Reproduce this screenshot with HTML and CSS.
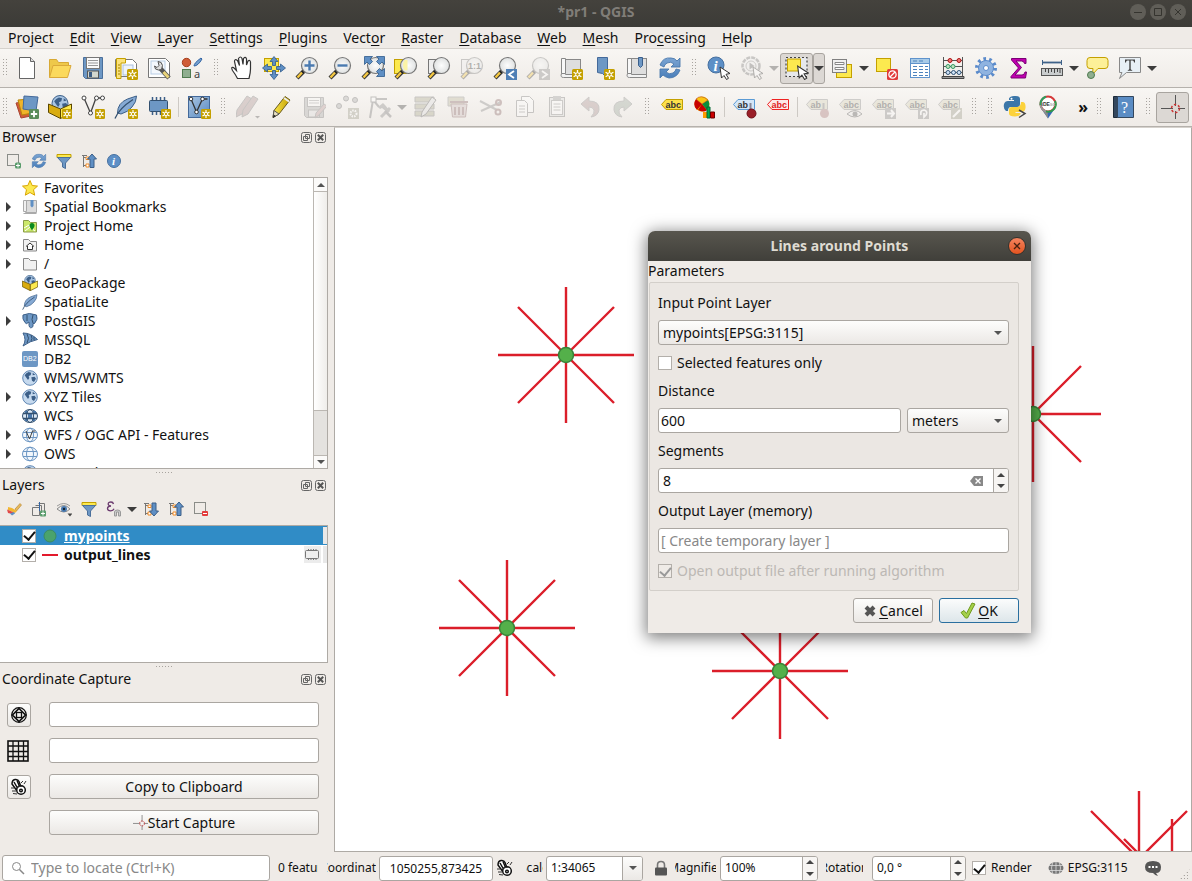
FILE: index.html
```html
<!DOCTYPE html>
<html lang="en">
<head>
<meta charset="utf-8">
<title>*pr1 - QGIS</title>
<link rel="stylesheet" href="styles.css">
</head>
<body>
<svg class="paints" aria-hidden="true">
  <defs>
    <linearGradient id="g-pen" x1="0" x2="1"><stop offset="0" stop-color="#fce94f"/><stop offset="1" stop-color="#c4a000"/></linearGradient>
    <linearGradient id="g-blue" x1="0" y1="0" x2="1" y2="1"><stop offset="0" stop-color="#a9c5e3"/><stop offset="1" stop-color="#5a8ac0"/></linearGradient>
    <linearGradient id="g-sync" x1="0" y1="0" x2="0" y2="1"><stop offset="0" stop-color="#7ba4d2"/><stop offset="1" stop-color="#4b7fba"/></linearGradient>
    <radialGradient id="g-lens"><stop offset="0" stop-color="#fdfdfd"/><stop offset="1" stop-color="#dfe1e1"/></radialGradient>
  </defs>
</svg>
<svg class="defs" aria-hidden="true">
  <symbol id="b-new" viewBox="0 0 11 11"><rect width="11" height="11" rx="1.500" fill="#c4a000"/><path d="M5.500 1v9M1.600 3.250l7.800 4.500M1.600 7.750l7.800-4.500" stroke="#fff" stroke-width="1.300"/><circle cx="5.500" cy="5.500" r="1.800" fill="#c4a000" stroke="#fff"/></symbol>
  <symbol id="b-plus" viewBox="0 0 11 11"><rect width="11" height="11" rx="1.500" fill="#5a8c5a"/><path d="M5.500 2v7M2 5.500h7" stroke="#fff" stroke-width="2"/></symbol>
  <symbol id="b-mag" viewBox="0 0 24 24"><path d="M8.500 15.500L2 22" stroke="#333" stroke-width="4.200"/><path d="M7 16.500L2.500 21.500" stroke="#f5c842" stroke-width="2.400"/><path d="M9.500 14L7.500 16.500" stroke="#222" stroke-width="3"/><circle cx="14.500" cy="9.500" r="8" fill="url(#g-lens)" stroke="#777" stroke-width="1.200"/></symbol>
  <symbol id="b-cursor" viewBox="0 0 12 14"><path d="M1 1l1.500 11 2.500-2.500 2.500 4 2-1.200-2.500-4 4-.8z" fill="#fff" stroke="#333"/></symbol>
  <symbol id="b-cont" viewBox="0 0 24 24"><path d="M4 8q2-4 6-5l4 1-1 4-3 1 1 3-2 3-3-4zM14 11l5-1 2 3-3 5-3-2zM16 4l4 3-4 1z" fill="#3c5f88"/></symbol>

  <symbol id="i-new" viewBox="0 0 24 24"><path d="M4.500 1.500h11l4 4v17h-15z" fill="#fff" stroke="#666"/><path d="M15.500 1.500v4h4" fill="#ddd" stroke="#666"/></symbol>
  <symbol id="i-open" viewBox="0 0 24 24"><path d="M1.500 21.500v-18h7l2 3h10v4" fill="#eec84a" stroke="#d8a934"/><path d="M1.500 21.500l3.500-12h18l-3.500 12z" fill="#fbd95d" stroke="#dba93a"/></symbol>
  <symbol id="i-save" viewBox="0 0 24 24"><path d="M2.500 1.500h19v21h-17l-2-2z" fill="#6d97c4" stroke="#4a6f9b"/><rect x="5.500" y="1.500" width="13" height="11" fill="#fafafa" stroke="#777"/><path d="M7 4.500h10M7 7h10M7 9.500h10" stroke="#999"/><rect x="6.500" y="15" width="11" height="7" fill="#d3d7cf" stroke="#555"/><rect x="8" y="16" width="3" height="5" fill="#3b5c85"/></symbol>
  <symbol id="i-layout" viewBox="0 0 24 24"><path d="M1.500 3.500h17l4 4v13h-21z" fill="#fff" stroke="#777"/><rect x="9" y="9" width="10" height="10" fill="#eef3fa" stroke="#a9c0dc"/><path d="M2.500 2.500h9v4.500h-4.500v15.500h-4.500z" fill="#fce27a" stroke="#c4a000"/><path d="M4 9h2M4 12h2M4 15h2M4 18h2" stroke="#a08000"/><use href="#b-new" x="13" y="13" width="11" height="11"/></symbol>
  <symbol id="i-lmgr" viewBox="0 0 24 24"><path d="M1.500 2.500h17l4 4v15h-21z" fill="#fff" stroke="#777"/><rect x="4" y="5" width="14" height="13" fill="#f4f8fd" stroke="#b9cde4"/><path d="M13 12l9 10" stroke="#555" stroke-width="4.500"/><path d="M16.500 16l5 5.500" stroke="#e8d37a" stroke-width="3"/><path d="M11 5.500q4 0 4.500 4l-1 4-3 .5q-4 0-4-4l2.500 1.500 2-2z" fill="#ddd" stroke="#555"/></symbol>
  <symbol id="i-style" viewBox="0 0 24 24"><circle cx="6.500" cy="6.500" r="4.200" fill="#cf5c36" stroke="#a63f1d"/><path d="M14 10q0-3 7-8l1 1q-4 7-8 7z" fill="#729fcf" stroke="#3465a4"/><rect x="2.500" y="13.500" width="8" height="8" fill="#8fae8f" stroke="#4f7a4f"/><text x="14" y="22" font-size="11" font-family="Noto Sans" fill="#444">a</text></symbol>
  <symbol id="i-hand" viewBox="0 0 24 24"><path d="M8.500 22.500q-2-4-5-8-2-4 1-3l3 3-2-9q0-3 3-1l2 5-1-7q2-3 3.500 0l1 6 .5-6q2-2.500 3 .5v6l1.500-4q2-1.500 2.500 1v7q0 4-1.500 9.500z" fill="#fff" stroke="#333" stroke-width="1.200"/></symbol>
  <symbol id="i-pan" viewBox="0 0 24 24"><rect x="2.500" y="2.500" width="14" height="13" fill="#fce94f" stroke="#c4a000"/><path d="M12 .5l4 5h-2.500v4h-3v-4h-2.500zM12 23.500l4-5h-2.500v-4h-3v4h-2.500zM.5 12l5-4v2.500h4v3h-4v2.500zM23.500 12l-5-4v2.500h-4v3h4v2.500z" fill="#5f8fc4" stroke="#2e5a8c" stroke-width=".8"/></symbol>
  <symbol id="i-zin" viewBox="0 0 24 24"><use href="#b-mag" width="24" height="24"/><path d="M14.500 4.500v10M9.500 9.500h10" stroke="#4a7ab0" stroke-width="2.400"/></symbol>
  <symbol id="i-zout" viewBox="0 0 24 24"><use href="#b-mag" width="24" height="24"/><path d="M9.500 9.500h10" stroke="#4a7ab0" stroke-width="2.400"/></symbol>
  <symbol id="i-zfull" viewBox="0 0 24 24"><use href="#b-mag" width="24" height="24"/><path d="M3.500.5h8l-2.500 2.500 2.500 2.500-3 3-2.500-2.500-2.500 2.500zM23.500.5h-8l2.500 2.500-2.500 2.500 3 3 2.500-2.500 2.500 2.500zM23.500 20.500h-8l2.500-2.500-2.500-2.500 3-3 2.500 2.500 2.500-2.500z" fill="#5f8fc4" stroke="#2e5a8c" stroke-width=".8"/></symbol>
  <symbol id="i-zsel" viewBox="0 0 24 24"><rect x=".5" y="3.500" width="12" height="14" fill="#fce94f" stroke="#c4a000"/><use href="#b-mag" width="24" height="24"/><path d="M13.500 4h-3q-3 5 0 10.500h3z" fill="#fbf3a6"/></symbol>
  <symbol id="i-zlay" viewBox="0 0 24 24"><rect x="1.500" y="3.500" width="12" height="14" fill="#eee" stroke="#777"/><use href="#b-mag" width="24" height="24"/></symbol>
  <symbol id="i-znat" viewBox="0 0 24 24"><rect x="1.500" y="3.500" width="12" height="14" fill="#eee" stroke="#777"/><use href="#b-mag" width="24" height="24"/><text x="8" y="13" font-size="9" font-weight="700" font-family="Liberation Sans" fill="#333">1:1</text></symbol>
  <symbol id="i-zlast" viewBox="0 0 24 24"><use href="#b-mag" width="24" height="24"/><rect x="13" y="13" width="11" height="11" fill="#4f7fb5"/><path d="M21 15l-5 3.500 5 3.500" fill="none" stroke="#fff" stroke-width="1.800"/></symbol>
  <symbol id="i-znext" viewBox="0 0 24 24"><use href="#b-mag" width="24" height="24"/><rect x="13" y="13" width="11" height="11" fill="#888"/><path d="M16 15l5 3.500-5 3.500" fill="none" stroke="#fff" stroke-width="1.800"/></symbol>
  <symbol id="i-map" viewBox="0 0 24 24"><rect x="5.500" y="3.500" width="16" height="17" fill="#dedede" stroke="#888"/><path d="M2.500 2.500h4v15h-4z" fill="#f8f8f8" stroke="#888"/><path d="M2.500 17.500q-1.500 4 2 4h17v-3h-15v-1z" fill="#f2f2f2" stroke="#888"/><use href="#b-new" x="13" y="13" width="11" height="11"/></symbol>
  <symbol id="i-bmnew" viewBox="0 0 24 24"><path d="M5.500 1.500h10v21l-5-5-5-1z" fill="#6d97c4" stroke="#44699a"/><use href="#b-new" x="12" y="13" width="11" height="11"/></symbol>
  <symbol id="i-bm" viewBox="0 0 24 24"><rect x="5.500" y="2.500" width="16" height="18" fill="#dedede" stroke="#888"/><path d="M2.500 2.500h4v15h-4z" fill="#f8f8f8" stroke="#888"/><path d="M2.500 17.500q-1.500 4 2 4h17v-3h-15v-1z" fill="#f2f2f2" stroke="#888"/><path d="M13.500 1.500h4v8l-2 2-2-2z" fill="#6d97c4" stroke="#3b5f8c"/></symbol>
  <symbol id="i-refresh" viewBox="0 0 24 24"><path d="M2 9q3-8 11-7 4 0 6 3l3-3v9h-9l3-3q-3-3-7-1-3 2-3 4zM22 14q-3 8-11 8-4-1-6-3l-3 3v-9h9l-3 3q3 3 7 1 3-2 3-4z" fill="url(#g-sync)" stroke="#4a78ad" stroke-width=".9"/></symbol>
  <symbol id="i-ident" viewBox="0 0 24 24"><circle cx="9" cy="9" r="8" fill="#5d8fc6" stroke="#46709f"/><text x="6.500" y="14.500" font-size="15" font-style="italic" font-weight="700" font-family="Liberation Serif" fill="#fff">i</text><use href="#b-cursor" x="12" y="10" width="12" height="14"/></symbol>
  <symbol id="i-run" viewBox="0 0 24 24"><circle cx="11" cy="10" r="8.500" fill="#eee" stroke="#777" stroke-width="2.500" stroke-dasharray="4 1"/><circle cx="11" cy="10" r="5" fill="#eee" stroke="#888"/><path d="M9.500 6.500v7l5-3.500z" fill="#666"/><use href="#b-cursor" x="12" y="10" width="12" height="14"/></symbol>
  <symbol id="i-select" viewBox="0 0 24 24"><rect x="1" y="1.500" width="21" height="19" fill="#e6e8ec" stroke="#444" stroke-width="1.200" stroke-dasharray="2 2"/><rect x="2.500" y="3" width="13" height="12" fill="#fce94f" stroke="#c4a000"/><use href="#b-cursor" x="11" y="9" width="14" height="15"/></symbol>
  <symbol id="i-selform" viewBox="0 0 24 24"><rect x="6.500" y="8.500" width="15" height="13" fill="#fce94f" stroke="#c4a000"/><rect x="2.500" y="3.500" width="14" height="13" fill="#f0f0f0" stroke="#808080"/><path d="M5 6.500h9v2h-9zM5 11.500h9v2h-9z" fill="#fff" stroke="#888"/></symbol>
  <symbol id="i-desel" viewBox="0 0 24 24"><rect x="1.500" y="2.500" width="14" height="13" fill="#fce94f" stroke="#c4a000"/><rect x="12" y="13" width="11" height="11" rx="1.500" fill="#e03a3a"/><circle cx="17.500" cy="18.500" r="3.600" fill="none" stroke="#fff" stroke-width="1.300"/><path d="M15 21l5-5" stroke="#fff" stroke-width="1.300"/></symbol>
  <symbol id="i-table" viewBox="0 0 24 24"><rect x="2.500" y="2.500" width="19" height="19" fill="#fff" stroke="#5f93cc"/><rect x="3" y="3" width="18" height="4" fill="#a8cbe8"/><path d="M3 7.500h18" stroke="#5f93cc"/><path d="M5 10.500h4M11 10.500h4M17 10.500h3M5 13.500h4M11 13.500h4M17 13.500h3M5 16.500h4M11 16.500h4M17 16.500h3M5 19.500h4M11 19.500h4M17 19.500h3M5 5h4M11 5h4" stroke="#4d83bd"/></symbol>
  <symbol id="i-abacus" viewBox="0 0 24 24"><path d="M2.500 1v21M21.500 1v21M2.500 4.500h19M2.500 10.500h19M2.500 16.500h19" fill="none" stroke="#555"/><path d="M1 20.500h22v2H1z" fill="#999" stroke="#444"/><g fill="#e77" stroke="#a11"><circle cx="9" cy="4.500" r="2"/><circle cx="18" cy="4.500" r="2"/></g><g fill="#bfe3bf" stroke="#396"><circle cx="7" cy="10.500" r="2"/><circle cx="12" cy="10.500" r="2"/></g><g fill="#cfe3f7" stroke="#357"><circle cx="7" cy="16.500" r="2"/><circle cx="12.500" cy="16.500" r="2"/><circle cx="18" cy="16.500" r="2"/></g></symbol>
  <symbol id="i-gear" viewBox="0 0 24 24"><circle cx="12" cy="12" r="9" fill="none" stroke="#5b8bcb" stroke-width="4" stroke-dasharray="2.600 3.055"/><circle cx="12" cy="12" r="7.500" fill="#8fb3e0" stroke="#5b8bcb"/><circle cx="12" cy="12" r="2.500" fill="#fff" stroke="#5b8bcb"/></symbol>
  <symbol id="i-sigma" viewBox="0 0 24 24"><path d="M4.500 2.500h14.500v5h-1.500q-.5-2.500-3-2.500h-5.500l5.500 6.500-6.500 7.500h7q2.500 0 3-3h1.500l-1 6h-14.500v-1.500l7.500-8.500-7-8z" fill="#c000b0" stroke="#7a0075"/></symbol>
  <symbol id="i-ruler" viewBox="0 0 24 24"><path d="M2 6.500h20" stroke="#3f6289" stroke-width="1.800"/><path d="M2.500 4v5M21.500 4v5" stroke="#3f6289"/><rect x="1.500" y="12.500" width="21" height="7" fill="#c9cccd" stroke="#555"/><path d="M5.500 13v3M8.500 13v4M11.500 13v3M14.500 13v4M17.500 13v3M20 13v4" stroke="#444"/></symbol>
  <symbol id="i-tip" viewBox="0 0 24 24"><path d="M5 1.500h15q3 0 3 3v5q0 3-3 3h-7l-5.500 6 .5-6h-3q-3 0-3-3v-5q0-3 3-3z" fill="#fdf098" stroke="#c4a000"/><circle cx="6" cy="19" r="3.500" fill="#8fae8f" stroke="#4f7a4f"/></symbol>
  <symbol id="i-text" viewBox="0 0 24 24"><path d="M1.500 1.500h21v15h-14l-7 6 2.500-6h-2.500z" fill="#e8f0f6" stroke="#888"/><path d="M7 3.500h10v3h-1q0-2-1.500-2h-1.800v8.500q0 1 1.500 1v.8h-4.400v-.8q1.500 0 1.500-1v-8.500h-1.800q-1.500 0-1.500 2h-1z" fill="#444"/></symbol>

  <symbol id="i-src" viewBox="0 0 24 24"><path d="M1 8l12-2 3 15-10 2z" fill="#cf5c36" stroke="#a43"/><path d="M3 5l12-1 2 14-10 2z" fill="#f0b429" stroke="#b8860b"/><path d="M9 1l14 1-2 14-13-2z" fill="#6d97c4" stroke="#44699a"/><use href="#b-plus" x="14" y="14" width="10" height="10"/></symbol>
  <symbol id="i-gpkg" viewBox="0 0 24 24"><circle cx="12" cy="8.500" r="8" fill="#a9c5e3" stroke="#3c5f88"/><use href="#b-cont" x="3" y="0" width="19" height="19"/><path d="M.5 9l12 5v9.500l-12-6z" fill="#d9ac10" stroke="#5c4800"/><path d="M12.500 14l11-5v9l-11 5.500z" fill="#fce94f" stroke="#5c4800"/></symbol>
  <symbol id="i-gpkgnew" viewBox="0 0 24 24"><use href="#i-gpkg" width="24" height="24"/><use href="#b-new" x="14" y="14" width="10" height="10"/></symbol>
  <symbol id="i-vec" viewBox="0 0 24 24"><path d="M3 3l6.500 15 5.500-15h7" fill="none" stroke="#444" stroke-width="1.300"/><g fill="#fff" stroke="#444"><circle cx="3" cy="3" r="2"/><circle cx="9.500" cy="18" r="2"/><circle cx="15.500" cy="3" r="2"/><circle cx="21.500" cy="3" r="2"/></g></symbol>
  <symbol id="i-vecnew" viewBox="0 0 24 24"><use href="#i-vec" width="24" height="24"/><use href="#b-new" x="14" y="14" width="10" height="10"/></symbol>
  <symbol id="i-feather" viewBox="0 0 24 24"><path d="M3.500 18q0-10 10-14l9-3q0 6-4.500 11-4 5-11 7z" fill="#86aad4" stroke="#3c5f88"/><path d="M1 23.500q4-10 18-19" fill="none" stroke="#33506f" stroke-width="1.300"/></symbol>
  <symbol id="i-feathernew" viewBox="0 0 24 24"><use href="#i-feather" width="24" height="24"/><use href="#b-new" x="14" y="14" width="10" height="10"/></symbol>
  <symbol id="i-mem" viewBox="0 0 24 24"><path d="M5.500 2v18M9.500 2v18M13.500 2v18M17.500 2v18" stroke="#3c5f88" stroke-width="1.500"/><rect x="2.500" y="5.500" width="18" height="11" rx="1" fill="#6d97c4" stroke="#33506f"/><use href="#b-new" x="14" y="14" width="10" height="10"/></symbol>
  <symbol id="i-virt" viewBox="0 0 24 24"><rect x="1.500" y="1.500" width="21" height="21" fill="url(#g-blue)" stroke="#44699a"/><path d="M4 4l5.500 13 6-13h5" fill="none" stroke="#333" stroke-width="1.300"/><g fill="#fff" stroke="#333"><circle cx="4" cy="4" r="1.800"/><circle cx="9.500" cy="17" r="1.800"/><circle cx="15.500" cy="4" r="1.800"/></g><use href="#b-new" x="14" y="14" width="10" height="10"/></symbol>
  <symbol id="i-pencil" viewBox="0 0 24 24"><path d="M4 22.500l1-7 11-14 5 3.500-11 14z" fill="url(#g-pen)" stroke="#6b5c1e"/><path d="M4 22.500l1-7 5 3.500z" fill="#e8e0c0" stroke="#555"/><path d="M4 23l.7-3.500 2 1.500z" fill="#222"/><path d="M15 3l5 3.500" stroke="#eee" stroke-width="2"/></symbol>
  <symbol id="i-edits" viewBox="0 0 24 24"><g fill="#a98f8f" stroke="#777"><path d="M0 22l1-7L11 1l5 3L6 19z"/><path d="M6 22l1-7L17 1l5 3-10 15z"/></g><path d="M19 21h5l-2.500 2.500z" fill="#555"/></symbol>
  <symbol id="i-saveed" viewBox="0 0 24 24"><path d="M2.500 2.500h19v20h-17l-2-2z" fill="#aaa" stroke="#777"/><rect x="5.500" y="2.500" width="13" height="9" fill="#fafafa" stroke="#777"/><path d="M7 5.500h10M7 8h10" stroke="#999"/><rect x="6.500" y="15" width="11" height="7" fill="#ddd" stroke="#777"/><path d="M13 23l1-5 8-9 3 2-8 9z" fill="#b99" stroke="#777"/></symbol>
  <symbol id="i-pts" viewBox="0 0 24 24"><g fill="#aaa" stroke="#666"><circle cx="11" cy="3.500" r="2.500"/><circle cx="20" cy="5" r="2.500"/><circle cx="4" cy="11" r="2.500"/></g><rect x="13" y="13" width="11" height="11" fill="#998"/><circle cx="18.500" cy="18.500" r="3" fill="none" stroke="#fff" stroke-width="2" stroke-dasharray="1.500 1"/></symbol>
  <symbol id="i-vert" viewBox="0 0 24 24"><path d="M5 5l-3 18M5 4h14M6 6l5 6" stroke="#777" stroke-width="2"/><path d="M13 22l9-9" stroke="#888" stroke-width="3"/><path d="M10 12l5-4 2 2 5 6-2 2-6-5-2 1z" fill="#888"/><path d="M17 16l6 6" stroke="#777" stroke-width="2.500"/><rect x="3" y="2" width="5" height="5" fill="#fff" stroke="#666"/></symbol>
  <symbol id="i-attr" viewBox="0 0 24 24"><path d="M2 2h19v5H2zM2 9h19v5H2zM2 16h19v5H2z" fill="#aaa88c" stroke="#777"/><path d="M8 22l1-5 10-15 4 3-10 14z" fill="#ddd" stroke="#555"/></symbol>
  <symbol id="i-trash" viewBox="0 0 24 24"><path d="M2 2h16v9H2z" fill="#bbb79a" stroke="#888"/><path d="M5 9h16l-1.500 13h-13z" fill="#cbb" stroke="#866"/><path d="M4 7h18M9 12v8M13 12v8M17 12v8" stroke="#866" stroke-width="2"/></symbol>
  <symbol id="i-cut" viewBox="0 0 24 24"><path d="M1 6l17 9M2 16l20-9" stroke="#888" stroke-width="2"/><g fill="none" stroke="#866" stroke-width="2"><circle cx="19.500" cy="7.500" r="2.500"/><circle cx="19" cy="17" r="2.500"/></g></symbol>
  <symbol id="i-copy" viewBox="0 0 24 24"><path d="M9.500 1.500h8l4 4v12h-12z" fill="#fff" stroke="#777"/><path d="M4.500 5.500h8l3 3v13h-11z" fill="#fff" stroke="#777"/><path d="M7 11h6M7 14h6M7 17h6" stroke="#888"/></symbol>
  <symbol id="i-paste" viewBox="0 0 24 24"><rect x="4.500" y="2.500" width="15" height="19" fill="#ddd" stroke="#777"/><rect x="6.500" y="5.500" width="11" height="14" fill="#fff" stroke="#888"/><path d="M8 1h8v4H8z" fill="#999"/><path d="M8.500 9h7M8.500 12h7M8.500 15h7" stroke="#888"/></symbol>
  <symbol id="i-undo" viewBox="0 0 24 24"><path d="M3 9l8-7v4q11 0 10 9-1 6-8 7 4-4 3-7-1-3-5-3v4z" fill="#a98f8f" stroke="#888"/></symbol>
  <symbol id="i-redo" viewBox="0 0 24 24"><path d="M21 9l-8-7v4q-11 0-10 9 1 6 8 7-4-4-3-7 1-3 5-3v4z" fill="#9aa79a" stroke="#888"/></symbol>
  <symbol id="i-abc" viewBox="0 0 24 24"><path d="M6 4.500h16.500v10H6l-4.500-5z" fill="#fce04a" stroke="#c4a000"/><text x="5.500" y="12.500" font-size="9" font-weight="700" font-family="Liberation Sans" fill="#333">abc</text></symbol>
  <symbol id="i-diag" viewBox="0 0 24 24"><circle cx="9" cy="9" r="7.500" fill="#f5c400"/><path d="M9 9L3 4q-4 6 1 11zM9 9l-4 6q6 3 9 0z" fill="#c80000"/><path d="M9 9l6-4q3 5-1 10z" fill="#0a8f3c"/><path d="M9 9L3 4q5-5 12 1z" fill="#fbc514" stroke="#a33" stroke-width=".5"/><path d="M10 17h4v6h-4z" fill="#f90"/><path d="M14 12h3v11h-3z" fill="#0a5" stroke="#063"/><path d="M17.500 17h4v6h-4z" fill="#c00" stroke="#600"/></symbol>
  <symbol id="i-pin" viewBox="0 0 24 24"><path d="M5 4.500h16.500v10H5l-4.500-5z" fill="#d4e6f7" stroke="#5b9bd5"/><text x="4.500" y="12.500" font-size="9" font-weight="700" font-family="Liberation Sans" fill="#333">ab</text><path d="M17.500 8v7" stroke="#889" stroke-width="2"/><circle cx="18.500" cy="18.500" r="4.500" fill="#9a1f28" stroke="#701018"/></symbol>
  <symbol id="i-abcred" viewBox="0 0 24 24"><path d="M6 4.500h16.500v10H6l-4.500-5z" fill="#fde8e8" stroke="#e22"/><text x="5.500" y="12.500" font-size="9" font-weight="700" font-family="Liberation Sans" fill="#d22">abc</text></symbol>
  <symbol id="i-abcg" viewBox="0 0 24 24"><path d="M5 4.500h16.500v10H5l-4.500-5z" fill="#d5d2b8" stroke="#888"/><text x="4.500" y="12.500" font-size="9" font-weight="700" font-family="Liberation Sans" fill="#333">abc</text></symbol>
  <symbol id="i-lpin" viewBox="0 0 24 24"><path d="M5 4.500h16.500v10H5l-4.500-5z" fill="#d5d2b8" stroke="#888"/><text x="4.500" y="12.500" font-size="9" font-weight="700" font-family="Liberation Sans" fill="#333">ab</text><path d="M17.500 8v7" stroke="#777" stroke-width="2"/><circle cx="18.500" cy="18.500" r="4.500" fill="#a77"/></symbol>
  <symbol id="i-leye" viewBox="0 0 24 24"><use href="#i-abcg" width="24" height="24"/><path d="M8 19q8-7 15 0-7 6-15 0z" fill="#eee" stroke="#555"/><circle cx="16" cy="19" r="2.500" fill="#555"/></symbol>
  <symbol id="i-lmove" viewBox="0 0 24 24"><use href="#i-abcg" width="24" height="24"/><rect x="13" y="13" width="11" height="11" fill="#888"/><path d="M15 18.500h7M19 15l3 3.500-3 3.500" fill="none" stroke="#fff" stroke-width="2"/></symbol>
  <symbol id="i-lrot" viewBox="0 0 24 24"><use href="#i-abcg" width="24" height="24"/><rect x="13" y="13" width="11" height="11" fill="#888"/><path d="M16 20q-1-5 3-5 4 1 2 5l-2 2v-4" fill="none" stroke="#fff" stroke-width="1.700"/></symbol>
  <symbol id="i-ledit" viewBox="0 0 24 24"><use href="#i-abcg" width="24" height="24"/><rect x="13" y="13" width="11" height="11" fill="#998"/><path d="M15 22l7-7" stroke="#fff" stroke-width="2.200"/></symbol>
  <symbol id="i-py" viewBox="0 0 24 24"><path d="M11 1q6-.5 6 3v5q0 3-3 3H8q-3 0-3 4H3q-3-2-2-7 1-3 4-3h6V5H6V3.500Q7 1 11 1z" fill="#3b76a8"/><path d="M12 21.500q-6 0-6-3v-4q0-2.500 3-2.500h6q3-1 3-5h2q3 1 2.500 6-.5 4-4 4h-6v1h5v1q-1 2.500-5.500 2.500z" fill="#fcd23b"/><circle cx="8.500" cy="3.800" r="1" fill="#fff"/><path d="M16 15l6 3.500-6 4" fill="none" stroke="#444" stroke-width="1.500"/></symbol>
  <symbol id="i-plug" viewBox="0 0 24 24"><path d="M12 23.500L5.500 14h13z" fill="#3568b8"/><path d="M12 23.500L5.500 14h6z" fill="#8a8a8a"/><circle cx="12" cy="9" r="7.500" fill="#fff" stroke="#d63a3a" stroke-width="2"/><path d="M4.500 9a7.500 7.500 0 0 0 6 7.400" fill="none" stroke="#999" stroke-width="2"/><path d="M10 16.400A7.500 7.500 0 0 0 19 6" fill="none" stroke="#2a9d50" stroke-width="2"/><path d="M4.500 10A7.500 7.500 0 0 1 10 1.800" fill="none" stroke="#2aa060" stroke-width="2"/><text x="5.500" y="11" font-size="5" font-weight="700" font-family="Liberation Sans" fill="#333">iDE<tspan fill="#aaa">sc</tspan></text></symbol>
  <symbol id="i-help" viewBox="0 0 24 24"><path d="M1.500 1.500h5v21h-5z" fill="#33475e" stroke="#1d2b3a"/><path d="M5.500 1.500h16v21h-16z" fill="#5a8cc4" stroke="#33475e"/><text x="9" y="17.500" font-size="16" font-family="Liberation Serif" fill="#fff">?</text></symbol>
  <symbol id="i-cross" viewBox="0 0 24 24"><path d="M14.500 0v11M14.500 16v8M0 13.500h12M17 13.500h7" stroke="#555"/><circle cx="14.500" cy="13.500" r="4" fill="none" stroke="#c33" stroke-width="1.500" stroke-dasharray="2.300 1.900"/></symbol>

  <symbol id="s-add" viewBox="0 0 16 16"><rect x="1.500" y="1.500" width="11" height="11" fill="none" stroke="#8a8c88"/><rect x="9" y="9.500" width="6" height="6" rx="1.500" fill="#5a9c6c"/><path d="M12 10.500v4M10 12.500h4" stroke="#fff"/></symbol>
  <symbol id="s-filter" viewBox="0 0 16 16"><path d="M1 1.500h14v3H1z" fill="#fce94f" stroke="#c4a000"/><path d="M1.500 4.500h13l-5 5.500v5.500l-3-1.500v-4z" fill="#6d97c4" stroke="#4a6f9b"/></symbol>
  <symbol id="s-up" viewBox="0 0 16 16"><path d="M2.500 2v12M2.500 4.500h4M2.500 12.500h4M1 2.500h5" stroke="#777" fill="none"/><path d="M5 4h3v2.500H5zM5 11h3v3H5z" fill="#fff" stroke="#f08a24"/><path d="M11 1l4.500 5h-2.500v8.500h-4V6h-2.500z" fill="#5f8fc4" stroke="#3c5f88"/></symbol>
  <symbol id="s-down" viewBox="0 0 16 16"><path d="M2.500 2v12M2.500 4.500h4M2.500 12.500h4M1 2.500h5" stroke="#777" fill="none"/><path d="M5 4h3v2.500H5zM5 11h3v3H5z" fill="#fff" stroke="#f08a24"/><path d="M11 15l4.500-5h-2.500V2h-4v8h-2.500z" fill="#5f8fc4" stroke="#3c5f88"/></symbol>
  <symbol id="s-info" viewBox="0 0 16 16"><circle cx="8" cy="8" r="6.500" fill="#5d8fc6" stroke="#46709f"/><text x="6" y="12" font-size="11" font-style="italic" font-weight="700" font-family="Liberation Serif" fill="#fff">i</text></symbol>
  <symbol id="s-brush" viewBox="0 0 16 16"><path d="M9 8l5-5.500 1.500 1.500-5 6z" fill="#e8b95a" stroke="#b08030" stroke-width=".6"/><path d="M2 6l4 1 5 3-2 2-7-3z" fill="#f2b632"/><path d="M1 8.500l7 3-2 1.500-4-1z" fill="#e04848"/><path d="M4 12.500l4-1.500 1 1.500-3 2z" fill="#5f8fc4"/></symbol>
  <symbol id="s-group" viewBox="0 0 16 16"><path d="M1.500 6.500h7v8h-7zM4.500 4.500h6v9" fill="none" stroke="#777"/><path d="M7.500 2.500h6v9" fill="none" stroke="#777"/><path d="M8.500 1v9" stroke="#3465a4"/><rect x="9" y="9.500" width="6" height="6" rx="1" fill="#5a9c6c"/><path d="M12 10.500v4M10 12.500h4" stroke="#fff"/></symbol>
  <symbol id="s-eye" viewBox="0 0 16 16"><path d="M1 8q7-7 13 0-6 6-13 0z" fill="#eee" stroke="#888"/><circle cx="8" cy="8" r="3" fill="#4a7ab0"/><circle cx="8" cy="8" r="1.200" fill="#123"/><path d="M1 5q7-5 13 0" fill="none" stroke="#999"/><path d="M11.500 12.500h5l-2.500 3z" fill="#444"/></symbol>
  <symbol id="s-eps" viewBox="0 0 16 16"><path d="M7.500 3Q7 1 5 1 2.200 1 2.200 3 2.200 4.800 5 5 1.500 5.200 1.500 7.500q0 2.300 3.300 2.300 2.500 0 3.200-2" fill="none" stroke="#6b3b6f" stroke-width="1.300"/><path d="M8.500 15v-4q0-2 3-2 3 0 3 2v4h-2v-4h-2v4z" fill="#ccc" stroke="#999"/></symbol>
  <symbol id="s-rem" viewBox="0 0 16 16"><rect x="1.500" y="1.500" width="11" height="11" fill="none" stroke="#8a8c88"/><rect x="9" y="10" width="6" height="5" rx="1" fill="#e33b3b"/><path d="M10 12.500h4" stroke="#fff"/></symbol>
  <symbol id="s-float" viewBox="0 0 11 11"><rect x=".5" y=".5" width="10" height="10" rx="2" fill="none" stroke="#666"/><path d="M4.500 2.500h4v4h-4zM2.500 4.500h4v4h-4z" fill="#efebe7" stroke="#666"/></symbol>
  <symbol id="s-close" viewBox="0 0 11 11"><rect x=".5" y=".5" width="10" height="10" rx="2" fill="none" stroke="#666"/><path d="M2.800 2.800l5.400 5.400M8.200 2.800l-5.400 5.400" stroke="#555" stroke-width="2"/></symbol>

  <symbol id="t-star" viewBox="0 0 16 16"><path d="M8 .5l2.200 5 5.300.6-4 3.600 1.200 5.500L8 12.500l-4.700 2.700 1.200-5.500-4-3.600 5.300-.6z" fill="#fce94f" stroke="#d9a400"/></symbol>
  <symbol id="t-bm" viewBox="0 0 16 16"><path d="M3.500 1.500h11v12h-11z" fill="#dcdcdc" stroke="#aaa"/><path d="M1.500 1.500h3v11h-3zM1.500 14.500h13" fill="#f0f0f0" stroke="#aaa"/><path d="M8.500 1h3v6l-1.500 1.500-1.500-1.500z" fill="#5f8fc4"/></symbol>
  <symbol id="t-proj" viewBox="0 0 16 16"><path d="M1.500 2.500h5l2 2h6v9.500h-13z" fill="#cbe86a" stroke="#8a9a4a"/><path d="M2 10l5-3 2 3 4 3M3 13l5-4" stroke="#fff" fill="none"/><circle cx="10" cy="7.500" r="2.500" fill="#0a8a1f"/><path d="M8 9l2 3.500L12 9z" fill="#0a8a1f"/></symbol>
  <symbol id="t-folder" viewBox="0 0 16 16"><path d="M1.500 2.500h5l2 2h6v9.500h-13z" fill="#f1f1f1" stroke="#888"/></symbol>
  <symbol id="t-home" viewBox="0 0 16 16"><use href="#t-folder" width="16" height="16"/><path d="M4 9.500l4-3.500 4 3.500M5.500 9v3.500h5v-3.500" fill="#fff" stroke="#333"/></symbol>
  <symbol id="t-pg" viewBox="0 0 16 16"><path d="M1 2q6-3 13.500 0 2 4-2 8.500l-1.500 0v3q-3 3-4-1v-3.500q-3 3-4 .5Q0 6 1 2z" fill="#6d97c4" stroke="#3c5f88"/><path d="M5 2v6M11 2q-2 5 0 8" fill="none" stroke="#33506f"/></symbol>
  <symbol id="t-ms" viewBox="0 0 16 16"><path d="M1 1q8 0 14.500 6.500Q8 9 1 14q4-6 0-13z" fill="#6d97c4" stroke="#3c5f88"/><path d="M5 2q3 4 0 9M9 3q2 4 0 6M12 5v3" fill="none" stroke="#33506f"/></symbol>
  <symbol id="t-db2" viewBox="0 0 16 16"><rect width="16" height="16" rx="2" fill="#6d97c4"/><text x="1" y="10" font-size="7" font-family="Liberation Sans" fill="#fff">DB2</text></symbol>
  <symbol id="t-globe" viewBox="0 0 16 16"><circle cx="8" cy="8" r="7.300" fill="#c5d9ee" stroke="#5f86b3"/><use href="#b-cont" width="16" height="16"/></symbol>
  <symbol id="t-grid" viewBox="0 0 16 16"><ellipse cx="8" cy="8" rx="7.500" ry="6.800" fill="#f2f7fc" stroke="#6d97c4"/><ellipse cx="8" cy="8" rx="3.500" ry="6.800" fill="none" stroke="#6d97c4"/><path d="M1 5.500h14M1 10.500h14" stroke="#6d97c4"/></symbol>
  <symbol id="t-wcs" viewBox="0 0 16 16"><ellipse cx="8" cy="8" rx="7.500" ry="6.500" fill="#dce8f5" stroke="#33506f"/><path d="M3 3h3v2H3zM6 6h4v4H6zM11 3h3v3h-3zM3 11h3v2H3zM10 11h3v2h-3z" fill="#4a78ad"/><ellipse cx="8" cy="8" rx="3.500" ry="6.500" fill="none" stroke="#33506f"/><path d="M1 5.500h14M1 10.500h14" stroke="#33506f" stroke-width="1.500"/></symbol>
  <symbol id="t-wfs" viewBox="0 0 16 16"><use href="#t-grid" width="16" height="16"/><path d="M4 4l3.500 8 3-8h3" fill="none" stroke="#444"/></symbol>
  <symbol id="c-mouse" viewBox="0 0 18 18"><g fill="#fff" stroke="#111" stroke-width="1.500"><path d="M2 6q0-4 3-4.500 3-.5 4 2l2 5.500-5 2.500z"/><path d="M4 4l4 7M7 2.500l3 7"/><circle cx="11" cy="12" r="4.300"/><circle cx="11" cy="12.500" r="1.300"/></g><path d="M7 9l6-1M1 10h3M2 13h4M11 5l2-2M14 6l2-3M3 15.500l4 .5" stroke="#333" fill="none"/></symbol>
  <symbol id="c-crs" viewBox="0 0 18 18"><g fill="none" stroke="#111" stroke-width="1.300"><circle cx="9" cy="9" r="7.300"/><path d="M9 2.500l6.500 6.500-6.500 6.500-6.500-6.500z" stroke-width="1.700"/><rect x="6.500" y="6.500" width="5" height="5"/></g></symbol>
  <symbol id="c-grid" viewBox="0 0 22 22"><g fill="none" stroke="#111"><rect x="1" y="1" width="20" height="20" stroke-width="1.600"/><path d="M6 1v20M11.500 1v20M16.500 1v20M1 6h20M1 11.500h20M1 16.500h20" stroke-width="1.300"/></g></symbol>
</svg>

<div class="app">
  <header class="titlebar">
    <h1>*pr1 - QGIS</h1>
    <div class="wbtns">
      <button aria-label="Minimize"><svg viewBox="0 0 16 16"><path d="M4 8.500h8"/></svg></button>
      <button aria-label="Maximize"><svg viewBox="0 0 16 16"><path d="M4.500 4.500h7v7h-7z"/></svg></button>
      <button aria-label="Close"><svg viewBox="0 0 16 16"><path d="M5 5l6 6M11 5l-6 6"/></svg></button>
    </div>
  </header>
  <nav class="menu">
    <button>Pro<u>j</u>ect</button><button><u>E</u>dit</button><button><u>V</u>iew</button><button><u>L</u>ayer</button><button><u>S</u>ettings</button><button><u>P</u>lugins</button><button>Vect<u>o</u>r</button><button><u>R</u>aster</button><button><u>D</u>atabase</button><button><u>W</u>eb</button><button><u>M</u>esh</button><button>Pro<u>c</u>essing</button><button><u>H</u>elp</button>
  </nav>

  <div class="toolbar">
    <i class="grip first"></i>
    <button class="tb" aria-label="New"><svg><use href="#i-new"/></svg></button>
    <button class="tb" aria-label="Open"><svg><use href="#i-open"/></svg></button>
    <button class="tb" aria-label="Save"><svg><use href="#i-save"/></svg></button>
    <button class="tb" aria-label="New layout"><svg><use href="#i-layout"/></svg></button>
    <button class="tb" aria-label="Layout manager"><svg><use href="#i-lmgr"/></svg></button>
    <button class="tb" aria-label="Style manager"><svg><use href="#i-style"/></svg></button>
    <i class="grip"></i>
    <button class="tb" aria-label="Pan"><svg><use href="#i-hand"/></svg></button>
    <button class="tb" aria-label="Pan to selection"><svg><use href="#i-pan"/></svg></button>
    <button class="tb" aria-label="Zoom in"><svg><use href="#i-zin"/></svg></button>
    <button class="tb" aria-label="Zoom out"><svg><use href="#i-zout"/></svg></button>
    <button class="tb" aria-label="Zoom full"><svg><use href="#i-zfull"/></svg></button>
    <button class="tb" aria-label="Zoom to selection"><svg><use href="#i-zsel"/></svg></button>
    <button class="tb" aria-label="Zoom to layer"><svg><use href="#i-zlay"/></svg></button>
    <button class="tb" disabled aria-label="Zoom native"><svg><use href="#i-znat"/></svg></button>
    <button class="tb" aria-label="Zoom last"><svg><use href="#i-zlast"/></svg></button>
    <button class="tb" disabled aria-label="Zoom next"><svg><use href="#i-znext"/></svg></button>
    <button class="tb" aria-label="New map view"><svg><use href="#i-map"/></svg></button>
    <button class="tb" aria-label="New bookmark"><svg><use href="#i-bmnew"/></svg></button>
    <button class="tb" aria-label="Bookmarks"><svg><use href="#i-bm"/></svg></button>
    <button class="tb" aria-label="Refresh"><svg><use href="#i-refresh"/></svg></button>
    <i class="grip"></i>
    <button class="tb" aria-label="Identify"><svg><use href="#i-ident"/></svg></button>
    <button class="tb" disabled aria-label="Run action"><svg><use href="#i-run"/></svg></button>
    <button class="drop" disabled aria-label="Action menu"></button>
    <button class="tb on" aria-label="Select"><svg><use href="#i-select"/></svg></button>
    <button class="drop on" aria-label="Select menu"></button>
    <button class="tb" aria-label="Select by form"><svg><use href="#i-selform"/></svg></button>
    <button class="drop" aria-label="Select by menu"></button>
    <button class="tb" aria-label="Deselect"><svg><use href="#i-desel"/></svg></button>
    <button class="tb" aria-label="Attribute table"><svg><use href="#i-table"/></svg></button>
    <button class="tb" aria-label="Field calculator"><svg><use href="#i-abacus"/></svg></button>
    <button class="tb" aria-label="Toolbox"><svg><use href="#i-gear"/></svg></button>
    <button class="tb" aria-label="Statistics"><svg><use href="#i-sigma"/></svg></button>
    <button class="tb" aria-label="Measure"><svg><use href="#i-ruler"/></svg></button>
    <button class="drop" aria-label="Measure menu"></button>
    <button class="tb" aria-label="Map tips"><svg><use href="#i-tip"/></svg></button>
    <button class="tb" aria-label="Text annotation"><svg><use href="#i-text"/></svg></button>
    <button class="drop" aria-label="Annotation menu"></button>
  </div>

  <div class="toolbar">
    <i class="grip first"></i>
    <button class="tb" aria-label="Data source manager"><svg><use href="#i-src"/></svg></button>
    <button class="tb" aria-label="New GeoPackage"><svg><use href="#i-gpkgnew"/></svg></button>
    <button class="tb" aria-label="New shapefile"><svg><use href="#i-vecnew"/></svg></button>
    <button class="tb" aria-label="New SpatiaLite layer"><svg><use href="#i-feathernew"/></svg></button>
    <button class="tb" aria-label="New scratch layer"><svg><use href="#i-mem"/></svg></button>
    <i class="sep"></i>
    <button class="tb" aria-label="New virtual layer"><svg><use href="#i-virt"/></svg></button>
    <i class="grip"></i>
    <button class="tb" disabled aria-label="Current edits"><svg><use href="#i-edits"/></svg></button>
    <button class="tb" aria-label="Toggle editing"><svg><use href="#i-pencil"/></svg></button>
    <button class="tb" disabled aria-label="Save edits"><svg><use href="#i-saveed"/></svg></button>
    <button class="tb" disabled aria-label="Add point"><svg><use href="#i-pts"/></svg></button>
    <button class="tb" disabled aria-label="Vertex tool"><svg><use href="#i-vert"/></svg></button>
    <button class="drop" disabled aria-label="Vertex menu"></button>
    <button class="tb" disabled aria-label="Modify attributes"><svg><use href="#i-attr"/></svg></button>
    <button class="tb" disabled aria-label="Delete"><svg><use href="#i-trash"/></svg></button>
    <button class="tb" disabled aria-label="Cut"><svg><use href="#i-cut"/></svg></button>
    <button class="tb" disabled aria-label="Copy"><svg><use href="#i-copy"/></svg></button>
    <button class="tb" disabled aria-label="Paste"><svg><use href="#i-paste"/></svg></button>
    <button class="tb" disabled aria-label="Undo"><svg><use href="#i-undo"/></svg></button>
    <button class="tb" disabled aria-label="Redo"><svg><use href="#i-redo"/></svg></button>
    <i class="grip"></i>
    <button class="tb" aria-label="Labeling"><svg><use href="#i-abc"/></svg></button>
    <button class="tb" aria-label="Diagrams"><svg><use href="#i-diag"/></svg></button>
    <i class="sep"></i>
    <button class="tb" aria-label="Highlight pinned"><svg><use href="#i-pin"/></svg></button>
    <button class="tb" aria-label="Unplaced labels"><svg><use href="#i-abcred"/></svg></button>
    <i class="sep"></i>
    <button class="tb" disabled aria-label="Pin label"><svg><use href="#i-lpin"/></svg></button>
    <button class="tb" disabled aria-label="Show label"><svg><use href="#i-leye"/></svg></button>
    <button class="tb" disabled aria-label="Move label"><svg><use href="#i-lmove"/></svg></button>
    <button class="tb" disabled aria-label="Rotate label"><svg><use href="#i-lrot"/></svg></button>
    <button class="tb" disabled aria-label="Change label"><svg><use href="#i-ledit"/></svg></button>
    <i class="grip"></i><i class="grip"></i>
    <button class="tb" aria-label="Python console"><svg><use href="#i-py"/></svg></button>
    <button class="tb" aria-label="Plugin"><svg><use href="#i-plug"/></svg></button>
    <button class="more">»</button>
    <i class="grip"></i>
    <button class="tb" aria-label="Help contents"><svg><use href="#i-help"/></svg></button>
    <i class="grip"></i>
    <button class="tb on" aria-label="Coordinate capture"><svg><use href="#i-cross"/></svg></button>
  </div>

  <main class="work">
    <aside class="docks">
      <section class="dock">
        <div class="dock-head"><h2>Browser</h2><button aria-label="Float"><svg><use href="#s-float"/></svg></button><button aria-label="Close"><svg><use href="#s-close"/></svg></button></div>
        <div class="dock-tools">
          <button aria-label="Add layer"><svg><use href="#s-add"/></svg></button>
          <button aria-label="Refresh"><svg><use href="#i-refresh"/></svg></button>
          <button aria-label="Filter"><svg><use href="#s-filter"/></svg></button>
          <button aria-label="Collapse all"><svg><use href="#s-up"/></svg></button>
          <button aria-label="Properties"><svg><use href="#s-info"/></svg></button>
        </div>
        <div class="tree browser">
          <ul>
            <li><svg><use href="#t-star"/></svg>Favorites</li>
            <li class="kids"><svg><use href="#t-bm"/></svg>Spatial Bookmarks</li>
            <li class="kids"><svg><use href="#t-proj"/></svg>Project Home</li>
            <li class="kids"><svg><use href="#t-home"/></svg>Home</li>
            <li class="kids"><svg><use href="#t-folder"/></svg>/</li>
            <li><svg><use href="#i-gpkg"/></svg>GeoPackage</li>
            <li><svg><use href="#i-feather"/></svg>SpatiaLite</li>
            <li class="kids"><svg><use href="#t-pg"/></svg>PostGIS</li>
            <li><svg><use href="#t-ms"/></svg>MSSQL</li>
            <li><svg><use href="#t-db2"/></svg>DB2</li>
            <li><svg><use href="#t-globe"/></svg>WMS/WMTS</li>
            <li class="kids"><svg><use href="#t-globe"/></svg>XYZ Tiles</li>
            <li><svg><use href="#t-wcs"/></svg>WCS</li>
            <li class="kids"><svg><use href="#t-wfs"/></svg>WFS / OGC API - Features</li>
            <li class="kids"><svg><use href="#t-grid"/></svg>OWS</li>
            <li><svg><use href="#t-globe"/></svg>GeoNode</li>
          </ul>
          <div class="scroll"><i class="up"></i><b></b><i class="down"></i></div>
        </div>
      </section>
      <div class="split"></div>
      <section class="dock">
        <div class="dock-head"><h2>Layers</h2><button aria-label="Float"><svg><use href="#s-float"/></svg></button><button aria-label="Close"><svg><use href="#s-close"/></svg></button></div>
        <div class="dock-tools">
          <button aria-label="Styling"><svg><use href="#s-brush"/></svg></button>
          <button aria-label="Add group"><svg><use href="#s-group"/></svg></button>
          <button aria-label="Themes"><svg><use href="#s-eye"/></svg></button>
          <button aria-label="Filter legend"><svg><use href="#s-filter"/></svg></button>
          <button aria-label="Expression filter"><svg><use href="#s-eps"/></svg></button>
          <button class="drop" aria-label="Expression menu"></button>
          <button aria-label="Expand all"><svg><use href="#s-down"/></svg></button>
          <button aria-label="Collapse all"><svg><use href="#s-up"/></svg></button>
          <button aria-label="Remove layer"><svg><use href="#s-rem"/></svg></button>
        </div>
        <div class="tree layers">
          <label class="layer sel"><input type="checkbox" checked><svg viewBox="0 0 16 16"><circle cx="8" cy="8" r="6" fill="#4aa36c" stroke="#3c8c60"/></svg><span>mypoints</span><i class="edge"></i></label>
          <label class="layer"><input type="checkbox" checked><svg viewBox="0 0 16 16"><path d="M0 8h16" stroke="#e31a2c" stroke-width="2"/></svg><span>output_lines</span><i class="chip"><svg viewBox="0 0 16 16"><path d="M4.500 3v11M7 3v11M9.500 3v11M12 3v11" stroke="#777"/><rect x="1.500" y="4.500" width="13" height="8" rx="1" fill="#eee" stroke="#777"/></svg></i><i class="edge"></i></label>
        </div>
      </section>
      <div class="split"></div>
      <section class="dock">
        <div class="dock-head"><h2>Coordinate Capture</h2><button aria-label="Float"><svg><use href="#s-float"/></svg></button><button aria-label="Close"><svg><use href="#s-close"/></svg></button></div>
        <div class="capture">
          <button class="btn sq" aria-label="Choose CRS"><svg><use href="#c-crs"/></svg></button><input class="field" aria-label="CRS coordinate">
          <svg class="gridicon"><use href="#c-grid"/></svg><input class="field" aria-label="Canvas coordinate">
          <button class="btn sq" aria-label="Track mouse"><svg><use href="#c-mouse"/></svg></button><button class="btn">Copy to Clipboard</button>
          <span></span><button class="btn"><svg class="ci"><use href="#i-cross"/></svg>Start Capture</button>
        </div>
      </section>
    </aside>
    <svg class="map" role="img" aria-label="Map canvas">
      <defs><g id="burst"><path d="M0-68v136M-68 0h136M-48-48l96 96M-48 48l96-96" stroke="#db1e2a" stroke-width="2.400"/><circle r="7.500" fill="#54b04a" stroke="#38833a" stroke-width="1.500"/></g></defs>
      <use href="#burst" x="231" y="227"/><use href="#burst" x="172" y="500"/><use href="#burst" x="445" y="543"/><use href="#burst" x="698" y="286"/><use href="#burst" x="804" y="731"/><use href="#burst" x="837" y="759"/>
    </svg>
  </main>

  <footer class="status">
    <label class="locate"><svg viewBox="0 0 14 14"><circle cx="5.500" cy="5.500" r="4" fill="none" stroke="#888"/><path d="M8.500 8.500l4.500 4.500" stroke="#888" stroke-width="1.500"/></svg><input placeholder="Type to locate (Ctrl+K)" aria-label="Type to locate"></label>
    <span class="clip feat">0 feature(s)</span>
    <label class="clip coord" for="coord"><span>Coordinate</span></label>
    <input class="field" id="coord" value="1050255,873425">
    <button class="plain" aria-label="Toggle extents"><svg width="18" height="18"><use href="#c-mouse"/></svg></button>
    <label class="clip scale" for="scale"><span>Scale</span></label>
    <div class="combo"><input id="scale" value="1:34065"><button aria-label="Scales"><i></i></button></div>
    <button class="plain lock" aria-label="Lock scale"><svg width="14" height="16" viewBox="0 0 14 16"><path d="M3.500 8V5q0-3.500 3.500-3.500T10.500 5v3" fill="none" stroke="#777" stroke-width="1.600"/><rect x="1" y="7.500" width="12" height="8" rx="1" fill="#555"/></svg></button>
    <label class="clip magn" for="mag"><span>Magnifier</span></label>
    <div class="spin"><input id="mag" value="100%"><span class="steps"><button aria-label="Increase"></button><button aria-label="Decrease"></button></span></div>
    <label class="clip rot" for="rot"><span>Rotation</span></label>
    <div class="spin narrow"><input id="rot" value="0,0 °"><span class="steps"><button aria-label="Increase"></button><button aria-label="Decrease"></button></span></div>
    <label class="render"><input type="checkbox" checked>Render</label>
    <button class="plain crs"><svg width="16" height="16" viewBox="0 0 16 16"><ellipse cx="8" cy="8" rx="7.500" ry="6" fill="#777"/><path d="M1 5.500h14M1 10.500h14M8 2v12M4.500 3q-2 5 0 10M11.500 3q2 5 0 10" stroke="#ddd" fill="none" stroke-width=".8"/></svg>EPSG:3115</button>
    <button class="plain" aria-label="Messages"><svg width="18" height="18" viewBox="0 0 18 18"><path d="M9 2q8 0 8 6t-5 6l2 3q-3-.5-5-3-8 0-8-6t8-6z" fill="#555"/><path d="M4.500 7h2v2h-2zM8 7h2v2H8zM11.500 7h2v2h-2z" fill="#fff"/></svg></button>
    <i class="resize"></i>
  </footer>

  <form class="dialog" onsubmit="return false">
    <header><h2>Lines around Points</h2><button type="button" aria-label="Close"><svg viewBox="0 0 16 16"><path d="M5 5l6 6M11 5l-6 6"/></svg></button></header>
    <h3>Parameters</h3>
    <div class="group">
      <label for="layer">Input Point Layer</label>
      <div class="pick ctl"><select id="layer"><option>mypoints[EPSG:3115]</option></select></div>
      <label class="check"><input type="checkbox">Selected features only</label>
      <label for="dist">Distance</label>
      <div class="row ctl"><input class="field" id="dist" value="600"><div class="pick unit"><select aria-label="Unit"><option>meters</option></select></div></div>
      <label for="seg">Segments</label>
      <div class="spin ctl"><input id="seg" value="8"><button type="button" class="clear" aria-label="Clear"><svg width="13" height="10" viewBox="0 0 13 10"><path d="M4 0h9v10H4L0 5z" fill="#888"/><path d="M5.500 2.500l5 5M10.500 2.500l-5 5" stroke="#fff" stroke-width="1.400"/></svg></button><span class="steps"><button type="button" aria-label="Increase"></button><button type="button" aria-label="Decrease"></button></span></div>
      <label for="out">Output Layer (memory)</label>
      <input class="field ctl" id="out" placeholder="[ Create temporary layer ]">
      <label class="check off"><input type="checkbox" checked disabled>Open output file after running algorithm</label>
    </div>
    <div class="actions">
      <button type="button" class="btn"><svg width="14" height="14" viewBox="0 0 14 14"><path d="M3 3l8 8M11 3l-8 8" stroke="#555" stroke-width="4"/></svg><span><u>C</u>ancel</span></button>
      <button type="button" class="btn ok"><svg width="16" height="17" viewBox="0 0 16 17"><path d="M1 10.500l3-2 2.500 3L12 1l3 1-7.500 14h-2z" fill="#a4d04a" stroke="#6f9a1d"/></svg><span><u>O</u>K</span></button>
    </div>
  </form>
</div>
</body>
</html>
```
FILE: styles.css
```css
* { box-sizing: border-box; }
body { margin: 0; font: 14px/20px "Noto Sans", "Open Sans", sans-serif; color: #111; background: #efebe7; }
h1, h2, h3, ul { margin: 0; padding: 0; font-weight: 400; }
button, input, select { font: inherit; color: inherit; margin: 0; padding: 0; }
button { border: 0; background: none; }
svg { display: block; flex: none; }
u { text-decoration-thickness: 1px; text-underline-offset: 2px; }
.defs { display: none; }
.paints { position: absolute; width: 0; height: 0; }

.app { position: relative; display: flex; flex-direction: column; height: 100vh; overflow: hidden; }

.titlebar { display: grid; grid-template-columns: 1fr auto 1fr; align-items: center; height: 27px; flex: none; background: linear-gradient(#44423d, #3c3b37); padding-bottom: 3px; }
.titlebar h1 { grid-column: 2; font-size: 14px; font-weight: 700; color: #807d78; }
.wbtns { display: flex; justify-content: flex-end; gap: 4px; padding-right: 6px; }
.wbtns button { width: 16px; height: 16px; border-radius: 50%; background: #605e58; }
.wbtns svg { stroke: #35342f; fill: none; }

.menu { display: flex; gap: 16px; height: 22px; flex: none; padding: 0 8px; border-bottom: 1px solid #d6d2cd; }

.toolbar { display: flex; align-items: center; height: 39px; flex: none; background: linear-gradient(#f8f6f3, #efebe7); border-bottom: 1px solid #b5b1ac; }
.tb { display: grid; place-items: center; width: 33px; height: 31px; flex: none; }
.tb svg { width: 24px; height: 24px; }
.tb:disabled svg { opacity: .35; }
.tb.on, .drop.on { background: #dcd8d4; border: 1px solid #a8a49f; border-radius: 3px; }
.grip { width: 16px; height: 18px; flex: none; padding: 0 6px; background: linear-gradient(90deg, transparent 1px, #f4f1ee 1px) 0 0 / 3px 3px, linear-gradient(#a8a49f 1px, transparent 1px) 0 0 / 3px 3px; background-clip: content-box; background-origin: content-box; }
.grip.first { width: 10px; padding: 0 3px; }
.sep { width: 7px; height: 20px; flex: none; background: linear-gradient(#cdc9c4, #cdc9c4) 3px 0 / 1px 100% no-repeat; }
.drop { width: 12px; height: 31px; flex: none; display: grid; place-items: center; }
.drop::after { content: ""; border: 5px solid transparent; border-top-color: #3c3c3c; border-bottom: 0; }
.drop:disabled::after { opacity: .35; }
.more { width: 27px; font-size: 16px; font-weight: 700; text-align: right; flex: none; padding-right: 3px; }

.work { display: flex; flex: 1; min-height: 0; }
.docks { display: flex; flex-direction: column; width: 334px; padding-right: 6px; flex: none; }
.dock-head { display: flex; align-items: center; gap: 3px; height: 20px; padding: 0 2px; }
.dock-head h2 { flex: 1; font-size: 14px; }
.dock-head svg { width: 11px; height: 11px; }
.dock-tools { display: flex; align-items: center; gap: 9px; height: 30px; padding: 0 6px 2px; }
.dock-tools svg { width: 16px; height: 16px; }
.dock-tools .drop { margin: 0 -4px 0 -5px; height: 16px; }
.tree { background: #fff; border: 1px solid #aeaaa5; border-left: 0; overflow: hidden; }
.browser { display: flex; height: 292px; }
.browser ul { flex: 1; list-style: none; overflow: hidden; }
.tree li { display: flex; align-items: center; gap: 6px; height: 19px; padding-left: 22px; position: relative; white-space: nowrap; }
.tree li svg { width: 16px; height: 16px; }
.tree li.kids::before { content: ""; position: absolute; left: 6px; border: 5px solid transparent; border-left-color: #3c3c3c; border-right: 0; }
.scroll { display: flex; flex-direction: column; width: 14px; border-left: 1px solid #bbb7b2; background: #e4e2df; }
.scroll i { height: 13px; background: #fbfaf9; display: grid; place-items: center; }
.scroll i::after { content: ""; border: 4px solid transparent; }
.scroll .up::after { border-bottom-color: #555; border-top: 0; }
.scroll .down { border-top: 1px solid #bbb7b2; }
.scroll .down::after { border-top-color: #555; border-bottom: 0; }
.scroll b { height: 220px; margin-bottom: auto; border: solid #bbb7b2; border-width: 1px 0; background: linear-gradient(90deg, #fff, #efedea); }
.split { height: 6px; display: grid; place-items: center; }
.split::after { content: ""; width: 16px; height: 1px; background: repeating-linear-gradient(90deg, #a8a49f 0 1px, transparent 1px 3px); }
.layers { height: 138px; }
.layer { display: flex; align-items: center; height: 19px; padding-left: 22px; font-weight: 700; }
.layer svg { width: 16px; height: 16px; margin-left: 6px; }
.layer span { flex: 1; margin-left: 6px; }
.layer .edge { width: 4px; height: 17px; background: #e8e8e8; }
.layer .chip { width: 17px; height: 17px; background: #ececec; margin-right: 2px; }
.layer .chip svg { margin: 0; }
.layer.sel { background: #308cc6; color: #fff; }
.layer.sel span { text-decoration: underline; }

input[type="checkbox"] { appearance: none; width: 14px; height: 14px; flex: none; background: #fff; border: 1px solid #b3afaa; display: grid; place-items: center; }
input[type="checkbox"]:checked::after { content: ""; width: 5px; height: 9px; border: solid #111; border-width: 0 2px 2px 0; transform: rotate(40deg); margin-top: -2px; }
input[type="checkbox"]:disabled { background: #efebe7; }
input[type="checkbox"]:disabled::after { border-color: #999; }

.field, .combo, .spin { height: 25px; min-width: 0; background: #fff; border: 1px solid #aaa6a1; border-radius: 3px; }
.field { padding: 0 2px; }
::placeholder { color: #888; opacity: 1; }
.btn { display: flex; align-items: center; justify-content: center; height: 25px; border: 1px solid #aaa6a1; border-radius: 3px; background: linear-gradient(#fdfdfc, #ebe8e5); }
.capture { display: grid; grid-template-columns: 24px 1fr; gap: 11px 18px; align-items: center; padding: 13px 9px 0 7px; }
.capture .sq { height: 24px; }
.sq svg { width: 18px; height: 18px; }
.gridicon { width: 22px; height: 22px; }
.ci { width: 15px; height: 15px; }

.map { flex: 1; min-width: 0; height: 100%; background: #fff; border: 1px solid #aeaaa5; border-top-color: #d6d2cd; fill: none; overflow: hidden; }

.status { position: relative; display: flex; align-items: center; height: 29px; flex: none; padding: 3px 2px 0; font-size: 12px; }
.locate { display: flex; align-items: center; gap: 6px; width: 268px; height: 26px; padding: 0 8px; background: #fff; border: 1px solid #aaa6a1; border-radius: 3px; font-size: 14px; margin-right: 8px; }
.locate svg { width: 14px; height: 14px; }
.locate input { border: 0; flex: 1; min-width: 0; background: none; }
.clip { overflow: hidden; white-space: nowrap; display: flex; justify-content: center; flex: none; }
.feat { width: 40px; justify-content: flex-start; margin-right: 9px; }
.coord { width: 49px; margin-right: 3px; }
#coord { width: 114px; text-align: center; margin-right: 3px; }
.plain { display: flex; align-items: center; gap: 4px; flex: none; }
.scale { width: 17px; margin: 0 3px 0 12px; }
.combo { display: flex; width: 97px; margin-right: 11px; overflow: hidden; }
.combo input, .spin input { border: 0; background: none; flex: 1; min-width: 0; padding: 0 4px; }
.combo button { width: 20px; border-left: 1px solid #aaa6a1; display: grid; place-items: center; background: linear-gradient(#fdfdfc, #ebe8e5); }
.combo i { border: 4px solid transparent; border-top-color: #555; border-bottom: 0; }
.magn { width: 41px; margin: 0 4px 0 7px; }
.rot { width: 37px; margin: 0 9px 0 8px; }
.spin { display: flex; align-items: stretch; overflow: hidden; }
.status .spin { width: 98px; flex: none; }
.status .narrow { width: 94px; }
.steps { display: grid; width: 15px; border-left: 1px solid #aaa6a1; background: #f7f5f3; }
.steps button { display: grid; place-items: center; }
.steps button::after { content: ""; border: 4px solid transparent; border-bottom-color: #444; border-top: 0; }
.steps button:last-child::after { border-top: 4px solid #444; border-bottom: 0; }
.render { display: flex; align-items: center; gap: 5px; margin: 0 16px 0 6px; }
.crs { margin-right: 16px; }
.resize { width: 12px; height: 12px; margin: auto 0 0 auto; background: linear-gradient(90deg, transparent 1px, #efebe7 1px) 0 0 / 3px 3px, linear-gradient(#a8a49f 1px, transparent 1px) 0 0 / 3px 3px; clip-path: polygon(100% 0, 100% 100%, 0 100%); }

.dialog { position: absolute; left: 648px; top: 231px; width: 383px; background: #efebe7; border-radius: 7px 7px 0 0; box-shadow: 0 3px 16px 2px rgba(0, 0, 0, .5); }
.dialog header { display: grid; grid-template-columns: 1fr auto 1fr; align-items: center; height: 30px; padding: 0 5px; border-radius: 7px 7px 0 0; background: linear-gradient(#58564e, #403f3a); }
.dialog header h2 { grid-column: 2; font-size: 14px; font-weight: 700; color: #dfdbd2; }
.dialog header button { justify-self: end; width: 18px; height: 18px; border-radius: 50%; background: linear-gradient(#f4845f, #e2531f); border: 1px solid #33322d; }
.dialog header svg { stroke: #47210f; stroke-width: 1.3; }
.dialog h3 { font-size: 14px; height: 21px; }
.group { margin: 0 12px 0 1px; padding: 10px 9px 9px 8px; border: 1px solid #d3cfca; border-radius: 2px; background: #ebe7e3; display: flex; flex-direction: column; }
.group > label { margin-top: 8px; }
.group > label:first-child { margin-top: 0; }
.ctl { margin-top: 7px; }
.check { display: flex; align-items: center; gap: 5px; }
.off { color: #bcb8b4; }
.row { display: flex; gap: 6px; }
.row .field { flex: 1; }
.pick { position: relative; height: 25px; }
.pick select { appearance: none; width: 100%; height: 25px; padding: 0 24px 0 4px; border: 1px solid #aaa6a1; border-radius: 3px; background: linear-gradient(#fdfdfc, #ebe8e5); }
.pick::after { content: ""; position: absolute; right: 7px; top: 11px; border: 4px solid transparent; border-top-color: #555; border-bottom: 0; pointer-events: none; }
.unit { width: 102px; }
.clear { padding: 0 10px; }
.actions { display: flex; justify-content: flex-end; gap: 6px; padding: 7px 12px 10px 0; }
.actions .btn { width: 80px; gap: 2px; }
.actions .ok { border-color: #2a6f9f; background: linear-gradient(#fbfcfc, #dde6ea); }
```
